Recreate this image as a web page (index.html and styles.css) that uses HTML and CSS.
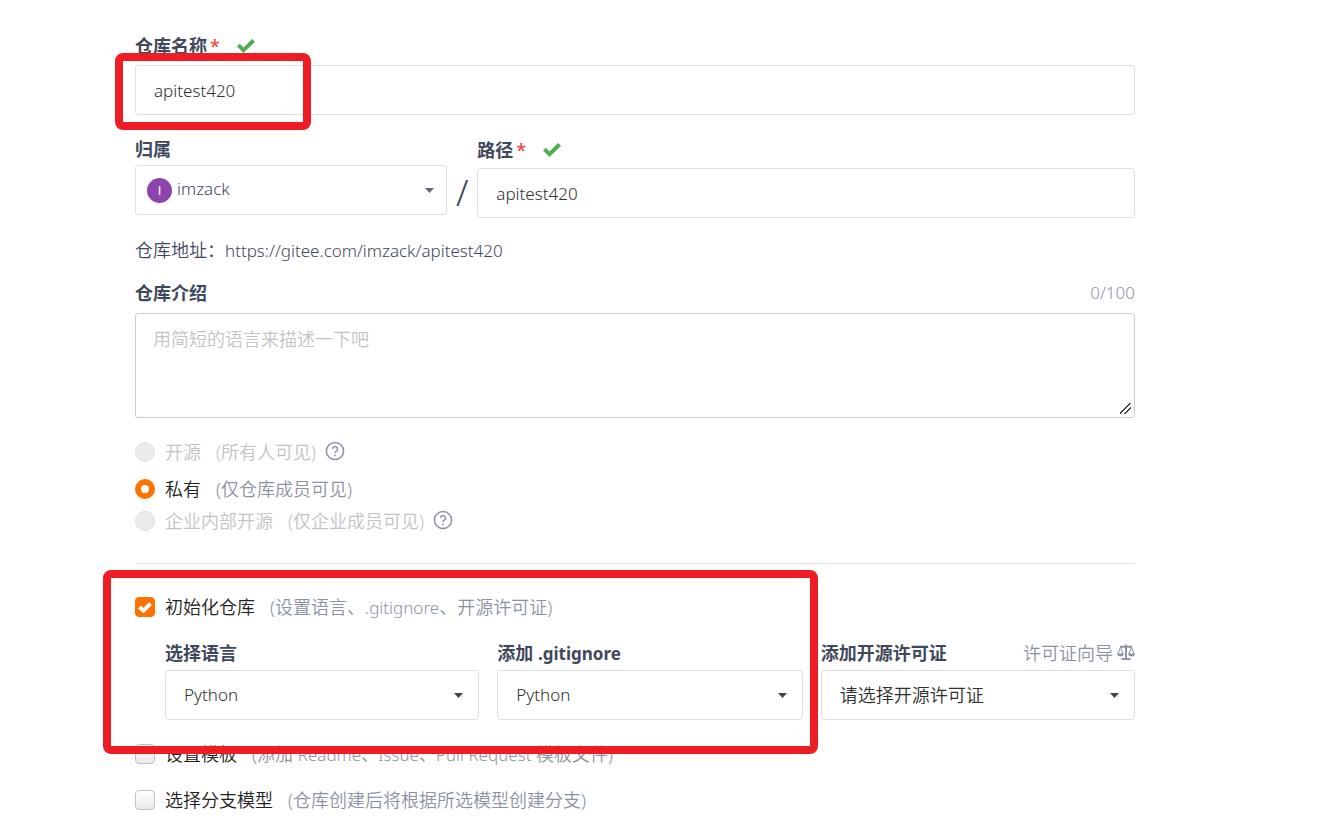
FILE: index.html
```html
<!DOCTYPE html>
<html lang="zh-CN">
<head>
    <meta charset="UTF-8">
    <meta name="viewport" content="width=device-width, initial-scale=1.0">
    <title>新建仓库</title>
    <link rel="stylesheet" href="styles.css">
</head>
<body>
    <form class="project-form">
        <div class="field">
            <div class="field-head">
                <label for="name">仓库名称</label>
                <span class="required">*</span>
                <svg class="check" viewBox="0 0 18 14"><path d="M0 7.5 2.8 4.8 6.5 8.4 15 0 18 2.7 6.5 14Z"/></svg>
            </div>
            <input class="control latin" type="text" id="name" value="apitest420">
        </div>

        <div class="path-row">
            <div class="field owner">
                <div class="field-head"><label for="owner">归属</label></div>
                <div class="select-box owner-box">
                    <span class="avatar">I</span>
                    <select class="control latin" id="owner"><option>imzack</option></select>
                    <svg class="caret" viewBox="0 0 9 5"><path d="M0 0H9L4.5 5Z"/></svg>
                </div>
            </div>
            <span class="slash">/</span>
            <div class="field path">
                <div class="field-head">
                    <label for="path">路径</label>
                    <span class="required">*</span>
                    <svg class="check" viewBox="0 0 18 14"><path d="M0 7.5 2.8 4.8 6.5 8.4 15 0 18 2.7 6.5 14Z"/></svg>
                </div>
                <input class="control latin" type="text" id="path" value="apitest420">
            </div>
        </div>

        <p class="address">仓库地址：<span class="latin">https://gitee.com/imzack/apitest420</span></p>

        <div class="field intro">
            <div class="field-head">
                <label for="intro">仓库介绍</label>
                <span class="aside latin">0/100</span>
            </div>
            <textarea class="control" id="intro" placeholder="用简短的语言来描述一下吧"></textarea>
        </div>

        <div class="visibility">
            <div class="option disabled">
                <input type="radio" name="visibility" id="public" disabled>
                <label for="public">开源<span class="hint">(所有人可见)</span></label>
                <svg class="help" viewBox="0 0 20 20"><circle cx="10" cy="10" r="8.6"/><path d="M7.5 8.1a2.5 2.5 0 1 1 3.8 2.1c-.9.5-1.3.9-1.3 1.8"/><path d="M10 13.4v1.8"/></svg>
            </div>
            <div class="option private">
                <input type="radio" name="visibility" id="private" checked>
                <label for="private">私有<span class="hint">(仅仓库成员可见)</span></label>
            </div>
            <div class="option disabled">
                <input type="radio" name="visibility" id="internal" disabled>
                <label for="internal">企业内部开源<span class="hint">(仅企业成员可见)</span></label>
                <svg class="help" viewBox="0 0 20 20"><circle cx="10" cy="10" r="8.6"/><path d="M7.5 8.1a2.5 2.5 0 1 1 3.8 2.1c-.9.5-1.3.9-1.3 1.8"/><path d="M10 13.4v1.8"/></svg>
            </div>
        </div>

        <div class="settings">
            <div class="option">
                <span class="checkbox">
                    <input type="checkbox" id="init" checked>
                    <svg viewBox="0 0 14 11"><path d="M1.5 5 5.4 8.7 12.5 1.7"/></svg>
                </span>
                <label for="init">初始化仓库<span class="hint">(设置语言、<span class="latin">.gitignore</span>、开源许可证)</span></label>
            </div>
            <div class="init-row">
                <div class="field">
                    <div class="field-head"><label for="language">选择语言</label></div>
                    <div class="select-box">
                        <select class="control latin" id="language"><option>Python</option></select>
                        <svg class="caret" viewBox="0 0 9 5"><path d="M0 0H9L4.5 5Z"/></svg>
                    </div>
                </div>
                <div class="field">
                    <div class="field-head"><label for="ignore">添加 <span class="latin">.gitignore</span></label></div>
                    <div class="select-box">
                        <select class="control latin" id="ignore"><option>Python</option></select>
                        <svg class="caret" viewBox="0 0 9 5"><path d="M0 0H9L4.5 5Z"/></svg>
                    </div>
                </div>
                <div class="field">
                    <div class="field-head">
                        <label for="license">添加开源许可证</label>
                        <a class="aside" href="#">许可证向导
                            <svg class="scale" viewBox="0 0 18 16"><path class="post" d="M9 .5V15M4.5 15h9M3 2.7h12"/><path d="M3.5 3 1 10M3.500 3 6 10M14.5 3 12 10M14.5 3 17 10"/><path class="pan" d="M.2 9.5h6.600a3.300 3 0 0 1-6.600 0ZM11.2 9.5h6.600a3.300 3 0 0 1-6.600 0Z"/></svg>
                        </a>
                    </div>
                    <div class="select-box">
                        <select class="control" id="license"><option>请选择开源许可证</option></select>
                        <svg class="caret" viewBox="0 0 9 5"><path d="M0 0H9L4.5 5Z"/></svg>
                    </div>
                </div>
            </div>
            <div class="option">
                <span class="checkbox"><input type="checkbox" id="template"></span>
                <label for="template">设置模板<span class="hint">(添加 <span class="latin">Readme、Issue、Pull Request</span> 模板文件)</span></label>
            </div>
            <div class="option">
                <span class="checkbox"><input type="checkbox" id="branch"></span>
                <label for="branch">选择分支模型<span class="hint">(仓库创建后将根据所选模型创建分支)</span></label>
            </div>
        </div>
    </form>

    <div class="mark mark-name"></div>
    <div class="mark mark-init"></div>
</body>
</html>
```

FILE: styles.css
```css
* {
    box-sizing: border-box;
}

body {
    position: relative;
    margin: 0;
    background-color: #fff;
    color: #40485b;
    font-family: "Noto Sans", "Noto Sans CJK SC", sans-serif;
    font-size: 18px;
    font-weight: 350;
    line-height: 24px;
}

.project-form {
    padding: 34px 190px 15px 135px;
}

.field {
    min-width: 0;
}

.field-head {
    display: flex;
    align-items: center;
    height: 24px;
    margin-bottom: 7px;
}

.field-head label {
    font-weight: 700;
    white-space: nowrap;
}

.required {
    margin-left: 3px;
    color: #f44336;
    font-weight: 500;
}

.check {
    width: 18px;
    height: 14px;
    margin-left: 17px;
    fill: #4caf50;
}

.control {
    display: block;
    width: 100%;
    height: 50px;
    margin: 0;
    padding: 0 18px;
    border: 1px solid #dce0e8;
    border-radius: 3px;
    outline: none;
    background-color: #fff;
    color: #303030;
    font: inherit;
    appearance: none;
}

.latin {
    font-size: 17px;
}

.select-box {
    position: relative;
}

.caret {
    position: absolute;
    top: 23px;
    right: 16px;
    width: 9px;
    height: 5px;
    fill: #444;
    pointer-events: none;
}

.path-row {
    display: grid;
    grid-template-columns: 312fr 30px 657fr;
    margin-top: 22px;
}

.owner .field-head {
    margin-bottom: 4px;
}

.path .field-head {
    margin-bottom: 6px;
}

.path {
    padding-top: 1px;
}

.owner-box .control {
    padding: 0 40px 2px 41px;
    color: #40485b;
}

.owner-box .caret {
    right: 13px;
    fill: #5f6777;
}

.avatar {
    position: absolute;
    top: 13px;
    left: 12px;
    width: 25px;
    height: 25px;
    border-radius: 50%;
    background-color: #8e44ad;
    color: #fff;
    font-family: "Liberation Sans", sans-serif;
    font-size: 13px;
    line-height: 25px;
    text-align: center;
}

.slash {
    padding-top: 34px;
    font-size: 36px;
    line-height: 44px;
    text-align: center;
}

.address {
    height: 24px;
    margin: 20px 0 19px;
}

.intro .field-head,
.init-row .field-head {
    justify-content: space-between;
}

.intro .field-head {
    margin-bottom: 8px;
}

.aside {
    color: #8c92a4;
    text-decoration: none;
}

textarea.control {
    height: 105px;
    padding: 13px 17px;
    border-color: #c9cad6;
    resize: both;
}

textarea::placeholder {
    color: #c3c3c3;
}

textarea::-webkit-resizer {
    background: linear-gradient(135deg, transparent 44%, #444 44%, #444 54%, transparent 54%, transparent 66%, #444 66%, #444 76%, transparent 76%) 1px 1px / 11px 11px no-repeat;
}

.visibility {
    padding: 22px 0 30px;
}

.option {
    display: flex;
    align-items: center;
    height: 24px;
    color: #212121;
    white-space: nowrap;
}

.private {
    margin: 13px 0 8px;
}

.option input {
    flex: none;
    width: 20px;
    height: 20px;
    margin: 0;
    appearance: none;
}

.option label {
    margin-left: 10px;
}

.hint {
    margin-left: 15px;
    color: #8c92a4;
}

.option input[type="radio"] {
    border: 1px solid #e0e0e0;
    border-radius: 50%;
    background-color: #ebebeb;
}

.option input[type="radio"]:checked {
    border: 6px solid #fe7300;
    background-color: #fff;
}

.disabled,
.disabled .hint {
    color: #c3c3c3;
}

.help {
    width: 20px;
    height: 20px;
    margin: 0 0 2px 9px;
    fill: none;
    stroke: #8c92a4;
    stroke-width: 1.5;
}

.settings {
    padding-top: 31px;
    border-top: 1px solid #dfe0e3;
}

.checkbox {
    display: flex;
    position: relative;
}

.option input[type="checkbox"] {
    border: 1px solid #c0c2c8;
    border-radius: 4px;
    background: linear-gradient(#fff, #e8e9eb);
}

.option input[type="checkbox"]:checked {
    border-color: #fe7300;
    background: #fe7300;
}

.checkbox svg {
    position: absolute;
    top: 5px;
    left: 3px;
    width: 14px;
    height: 11px;
    fill: none;
    stroke: #fff;
    stroke-width: 4;
    pointer-events: none;
}

.init-row {
    display: grid;
    grid-template-columns: 314fr 305fr 314fr;
    gap: 18px;
    margin: 22px 0;
    padding-left: 30px;
}

.init-row .field-head {
    margin-bottom: 5px;
}

.init-row .aside {
    display: flex;
    align-items: center;
    gap: 4px;
    white-space: nowrap;
}

.scale {
    width: 18px;
    height: 16px;
    margin-bottom: 3px;
    fill: none;
    stroke: #8c92a4;
}

.scale .post {
    stroke-width: 2;
}

.scale .pan {
    fill: #8c92a4;
    stroke: none;
}

.settings > .option:last-child {
    margin-top: 22px;
}

.mark {
    position: absolute;
    border: 8px solid #ee1c25;
    border-radius: 8px;
    pointer-events: none;
}

.mark-name {
    top: 53px;
    left: 115px;
    width: 196px;
    height: 77px;
}

.mark-init {
    top: 570px;
    left: 103px;
    width: 715px;
    height: 184px;
}
```
